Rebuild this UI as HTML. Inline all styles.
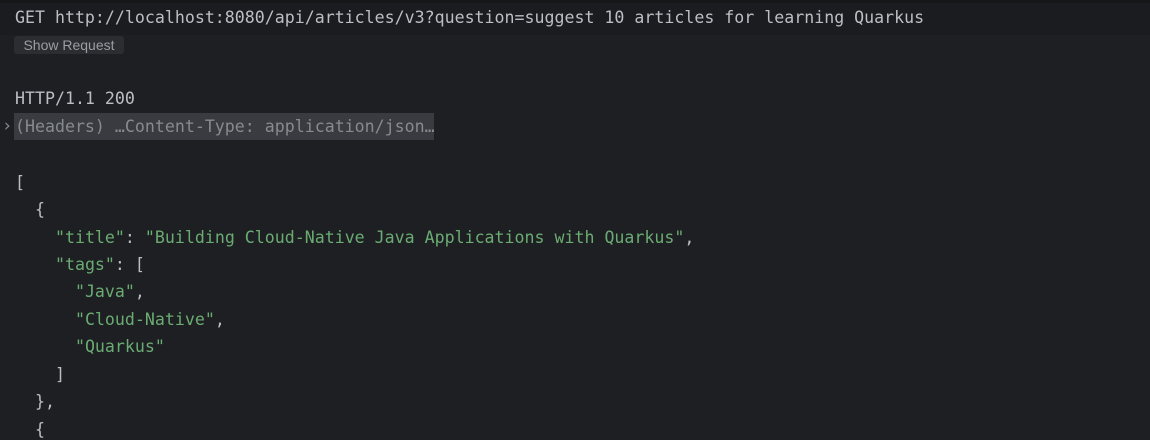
<!DOCTYPE html>
<html><head><style>
body{margin:0;width:1150px;height:432px;background:#1e1f22;overflow:hidden;position:relative;font-family:"DejaVu Sans Mono","Liberation Mono",monospace;font-size:16.6px;color:#bcbec4}
.top{position:absolute;left:0;top:0;width:1150px;height:35px;background:#1b1c1f;border-top:3px solid #161719;box-sizing:border-box}
.l{position:absolute;left:15px;white-space:pre;line-height:20px;height:20px}
.g{color:#6aab73}
.btn{position:absolute;left:14px;top:36px;width:110px;height:18px;background:#2b2d30;border-radius:3px;color:#9a9da3;font-family:"Liberation Sans",sans-serif;font-size:14px;line-height:18px;text-align:center}
.hdr{position:absolute;left:14px;top:113px;width:420px;height:27px;background:#393b40;color:#868a91;white-space:pre;line-height:27px;padding-left:1px;box-sizing:border-box}
.chev{position:absolute;left:2px;top:113px;line-height:27px;color:#868a91;font-size:17px}
</style></head><body>
<div class="top"></div>
<div class="l" style="top:8px">GET http://localhost:8080/api/articles/v3?question=suggest 10 articles for learning Quarkus</div>
<div class="btn">Show Request</div>
<div class="l" style="top:89px">HTTP/1.1 200</div>
<div class="chev">›</div>
<div class="hdr">(Headers) …Content-Type: application/json…</div>
<div class="l" style="top:173px">[</div>
<div class="l" style="top:200px">  {</div>
<div class="l" style="top:228px">    <span class="g">"title"</span>: <span class="g">"Building Cloud-Native Java Applications with Quarkus"</span>,</div>
<div class="l" style="top:255px">    <span class="g">"tags"</span>: [</div>
<div class="l" style="top:282px">      <span class="g">"Java"</span>,</div>
<div class="l" style="top:310px">      <span class="g">"Cloud-Native"</span>,</div>
<div class="l" style="top:337px">      <span class="g">"Quarkus"</span></div>
<div class="l" style="top:365px">    ]</div>
<div class="l" style="top:392px">  },</div>
<div class="l" style="top:420px">  {</div>
</body></html>
